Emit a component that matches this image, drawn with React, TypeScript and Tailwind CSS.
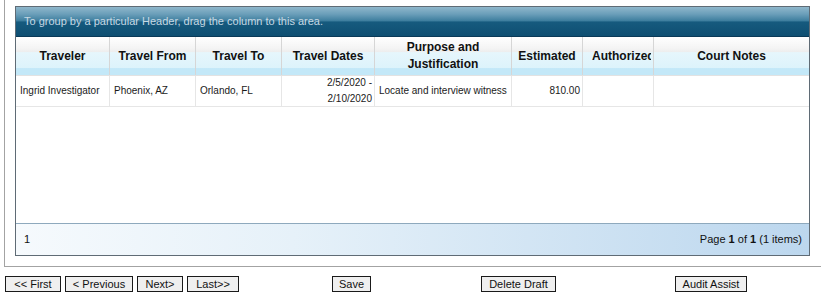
import React from "react";

const cols = "grid-cols-[94px_86px_86px_93px_137px_71px_71px_155px]";

const headerBg =
  "bg-[linear-gradient(to_bottom,#ffffff_0%,#f4f4f4_30%,#ededed_39%,#e6f6fc_41%,#ddf3fb_81%,#c3e8f8_83%,#c3e8f8_100%)]";

function HCell({ children, last, clip }: { children: React.ReactNode; last?: boolean; clip?: boolean }) {
  return (
    <div
      className={`h-[38px] flex items-center ${clip ? "pl-[9px] pr-[2px]" : "justify-center px-[2px]"} ${
        last ? "" : "border-r border-[#d6d6d6]"
      } ${headerBg} text-[12px] font-bold leading-[17px] text-[#111] text-center overflow-hidden`}
    >
      {clip ? <div className="overflow-hidden whitespace-nowrap">{children}</div> : <div>{children}</div>}
    </div>
  );
}

function DCell({ children, right, last }: { children?: React.ReactNode; right?: boolean; last?: boolean }) {
  return (
    <div
      className={`h-[30px] flex items-center ${right ? "justify-end text-right pr-[2px] pl-[2px]" : "pl-[4px] pr-[2px]"} ${
        last ? "" : "border-r border-[#e6e6e6]"
      } text-[10px] leading-[16px] text-[#1a1a1a] whitespace-nowrap`}
    >
      <div>{children}</div>
    </div>
  );
}

function Btn({ label, w, ml }: { label: string; w: string; ml: string }) {
  return (
    <div
      className={`${w} ${ml} h-[16px] border border-[#1a1a1a] bg-[#efefef] flex items-center justify-center text-[11px] leading-none text-[#111]`}
    >
      {label}
    </div>
  );
}

export default function App() {
  return (
    <div className="w-[821px] h-[298px] bg-white overflow-hidden font-['Liberation_Sans',Arial,sans-serif]">
      <div className="ml-[4px] border-l border-b border-[#a3a3a3] pl-[10px] pt-[6px] pb-[10px]">
        <div className="w-[795px] border border-[#5f6b75]">
          {/* group area */}
          <div className="h-[30px] flex items-center pl-[8px] border-b border-[#0a3a58] bg-[linear-gradient(to_bottom,#8fb7cb_0%,#6a9eb9_25%,#3f7f9f_47%,#165a7e_52%,#0f4f72_100%)] text-[11px] text-[#c6d8e3]">
            To group by a particular Header, drag the column to this area.
          </div>
          {/* header */}
          <div className={`grid ${cols} border-b border-[#e2e2e2]`}>
            <HCell>Traveler</HCell>
            <HCell>Travel From</HCell>
            <HCell>Travel To</HCell>
            <HCell>Travel Dates</HCell>
            <HCell>
              Purpose and
              <br />
              Justification
            </HCell>
            <HCell>Estimated</HCell>
            <HCell clip>Authorized</HCell>
            <HCell last>Court Notes</HCell>
          </div>
          {/* data row */}
          <div className={`grid ${cols} border-b border-[#e6e6e6]`}>
            <DCell>Ingrid Investigator</DCell>
            <DCell>Phoenix, AZ</DCell>
            <DCell>Orlando, FL</DCell>
            <DCell right>
              2/5/2020 -
              <br />
              2/10/2020
            </DCell>
            <DCell>Locate and interview witness</DCell>
            <DCell right>810.00</DCell>
            <DCell></DCell>
            <DCell last></DCell>
          </div>
          {/* empty space */}
          <div className="h-[116px] bg-white" />
          {/* pager */}
          <div className="h-[32px] border-t border-[#8ea9bd] bg-[linear-gradient(to_right,#f6fafd_0%,#e6f1f9_35%,#bcd7ee_100%)] flex items-center justify-between pl-[8px] pr-[7px] text-[11px] text-[#111]">
            <span>1</span>
            <span>
              Page <b>1</b> of <b>1</b> (1 items)
            </span>
          </div>
        </div>
      </div>
      {/* buttons */}
      <div className="flex mt-[9px]">
        <Btn label="<< First" w="w-[56px]" ml="ml-[5px]" />
        <Btn label="< Previous" w="w-[68px]" ml="ml-[4px]" />
        <Btn label="Next>" w="w-[46px]" ml="ml-[4px]" />
        <Btn label="Last>>" w="w-[52px]" ml="ml-[4px]" />
        <Btn label="Save" w="w-[39px]" ml="ml-[93px]" />
        <Btn label="Delete Draft" w="w-[75px]" ml="ml-[110px]" />
        <Btn label="Audit Assist" w="w-[72px]" ml="ml-[119px]" />
      </div>
    </div>
  );
}
